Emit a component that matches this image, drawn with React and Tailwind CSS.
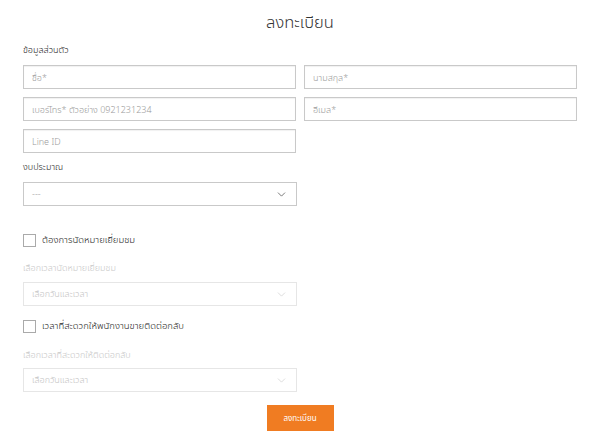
import { ChevronDown } from "lucide-react";

function Field({ placeholder }) {
  return (
    <input
      placeholder={placeholder}
      className="h-[24px] w-full border border-[#c9c9c9] bg-white px-[8px] text-[9px] font-light text-[#555] placeholder:text-[#9a9a9a] shadow-[inset_0_1px_1px_rgba(0,0,0,0.06)] outline-none"
    />
  );
}

function Select({ text, disabled }) {
  return (
    <div
      className={
        "flex h-[24px] w-[274px] items-center justify-between border bg-white pl-[8px] pr-[8px] text-[9px] font-light " +
        (disabled ? "border-[#e6e6e6] text-[#c4c4c4]" : "border-[#c9c9c9] text-[#9a9a9a]")
      }
    >
      <span>{text}</span>
      <ChevronDown
        size={13}
        strokeWidth={1.3}
        className={disabled ? "text-[#cfcfcf]" : "text-[#444]"}
      />
    </div>
  );
}

function Check({ label }) {
  return (
    <div className="flex h-[14px] items-center gap-[6px]">
      <span className="h-[13px] w-[13px] border border-[#aaa] bg-white" />
      <span className="text-[9.5px] font-light text-[#222]">{label}</span>
    </div>
  );
}

export default function App() {
  return (
    <div
      className="h-[443px] w-[600px] bg-white px-[23px]"
      style={{ fontFamily: '"Noto Sans", "Noto Sans Thai", sans-serif' }}
    >
      <div className="pt-[12px] text-center text-[16.5px] font-light leading-[20px] text-[#333]">ลงทะเบียน</div>

      <div className="mt-[12px] text-[9px] font-light leading-[12px] text-[#222]">ข้อมูลส่วนตัว</div>

      <div className="mt-[9px] grid grid-cols-2 gap-x-[8px] gap-y-[8px]">
        <Field placeholder="ชื่อ*" />
        <Field placeholder="นามสกุล*" />
        <Field placeholder="เบอร์โทร* ตัวอย่าง 0921231234" />
        <Field placeholder="อีเมล*" />
        <Field placeholder="Line ID" />
      </div>

      <div className="mt-[8px] text-[9px] font-light leading-[12px] text-[#222]">งบประมาณ</div>
      <div className="mt-[9px]">
        <Select text="---" />
      </div>

      <div className="mt-[27px]">
        <Check label="ต้องการนัดหมายเยี่ยมชม" />
      </div>
      <div className="mt-[15px] text-[9px] font-light leading-[12px] text-[#c8c8c8]">เลือกเวลานัดหมายเยี่ยมชม</div>
      <div className="mt-[8px]">
        <Select text="เลือกวันและเวลา" disabled />
      </div>

      <div className="mt-[13px]">
        <Check label="เวลาที่สะดวกให้พนักงานขายติดต่อกลับ" />
      </div>
      <div className="mt-[16px] text-[9px] font-light leading-[12px] text-[#c8c8c8]">เลือกเวลาที่สะดวกให้ติดต่อกลับ</div>
      <div className="mt-[7px]">
        <Select text="เลือกวันและเวลา" disabled />
      </div>

      <div className="mt-[13px] flex justify-center">
        <button className="h-[26px] w-[67px] bg-[#f07c22] text-[8px] text-white">ลงทะเบียน</button>
      </div>
    </div>
  );
}
